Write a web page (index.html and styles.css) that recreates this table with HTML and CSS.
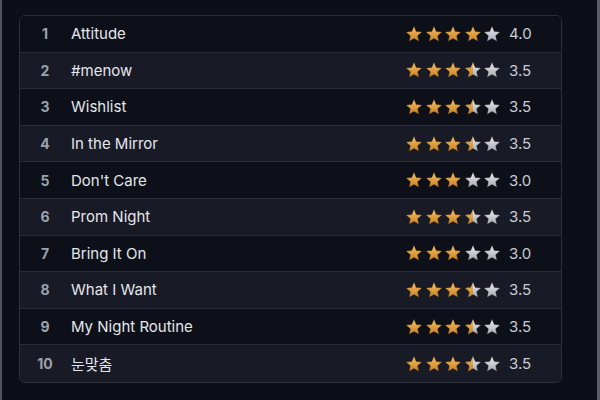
FILE: index.html
```html
<!DOCTYPE html>
<html>
<head>
<meta charset="utf-8">
<link rel="stylesheet" href="styles.css">
</head>
<body>
<svg width="0" height="0" class="defs">
  <defs>
    <linearGradient id="gold" x1="0" y1="0" x2="0" y2="1">
      <stop offset="0" stop-color="#f5c262"/>
      <stop offset="1" stop-color="#c97f26"/>
    </linearGradient>
    <linearGradient id="grey" x1="0" y1="0" x2="0" y2="1">
      <stop offset="0" stop-color="#eceef2"/>
      <stop offset="1" stop-color="#a3a8b2"/>
    </linearGradient>
    <clipPath id="lefthalf"><rect x="0" y="0" width="8" height="16"/></clipPath>
    <path id="star" d="M8 0.3 L10.23 5.53 L15.89 6.04 L11.61 9.77 L12.88 15.31 L8 12.4 L3.12 15.31 L4.39 9.77 L0.11 6.04 L5.77 5.53 Z"/>
  </defs>
</svg>
<div class="page">
  <div class="list" id="list"></div>
</div>
<script src="app.js"></script>
</body>
</html>
```
FILE: app.js
```js
const data = [
  ["Attitude", 4.0], ["#menow", 3.5], ["Wishlist", 3.5], ["In the Mirror", 3.5],
  ["Don't Care", 3.0], ["Prom Night", 3.5], ["Bring It On", 3.0], ["What I Want", 3.5],
  ["My Night Routine", 3.5], ["눈맞춤", 3.5]
];
const list = document.getElementById('list');
const stroke = 'stroke="rgba(50,30,5,0.5)" stroke-width="0.5" stroke-linejoin="round"';
data.forEach(([title, r], i) => {
  const row = document.createElement('div');
  row.className = 'row';
  let stars = '';
  for (let s = 1; s <= 5; s++) {
    let inner;
    if (r >= s) inner = `<use href="#star" fill="url(#gold)" ${stroke}/>`;
    else if (r >= s - 0.5) inner = `<use href="#star" fill="url(#grey)" ${stroke}/><use href="#star" fill="url(#gold)" clip-path="url(#lefthalf)" ${stroke}/>`;
    else inner = `<use href="#star" fill="url(#grey)" ${stroke}/>`;
    stars += `<svg class="star" viewBox="0 0 16 16">${inner}</svg>`;
  }
  row.innerHTML = `<span class="rank">${i + 1}</span><span class="title">${title}</span><span class="stars">${stars}</span><span class="score">${r.toFixed(1)}</span>`;
  list.appendChild(row);
});
```
FILE: styles.css
```css
html, body { margin: 0; padding: 0; }
body {
  background: #0c0f17;
  font-family: "Inter", "Noto Sans CJK KR", sans-serif;
  width: 600px;
  height: 400px;
  overflow: hidden;
}
.defs { position: absolute; }
.page {
  box-sizing: border-box;
  width: 600px;
  height: 400px;
  border-left: 2px solid #50535b;
  border-right: 3px solid #5a5e66;
  padding: 15px 0 0 17px;
}
.list {
  width: 543px;
  box-sizing: border-box;
  border: 1px solid #2b2f3a;
  border-radius: 6px;
  overflow: hidden;
}
.row {
  box-sizing: border-box;
  height: 36.6px;
  display: flex;
  align-items: center;
  border-bottom: 1px solid #2a2d38;
  background: #0d1018;
}
.row:last-child { border-bottom: none; }
.row:nth-child(even) { background: #181a25; }
.rank {
  width: 50px;
  text-align: center;
  font-weight: 700;
  font-size: 14px;
  color: #9da2ad;
}
.title {
  flex: 1;
  font-size: 15px;
  color: #e4e6ec;
  padding-left: 1px;
}
.stars { display: flex; gap: 3.5px; margin-right: 9px; }
.star { width: 16px; height: 16px; display: block; }
.score {
  width: 52px;
  font-size: 15px;
  color: #c9ccd4;
}
```
